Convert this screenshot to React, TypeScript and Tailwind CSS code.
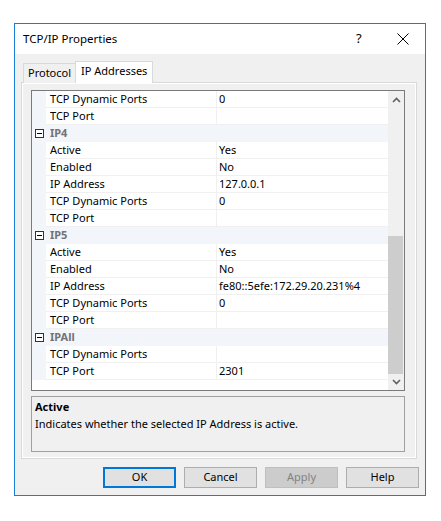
import React from "react";

type Row = { cat?: string; label?: string; value?: string };

const rows: Row[] = [
  { label: "TCP Dynamic Ports", value: "0" },
  { label: "TCP Port", value: "" },
  { cat: "IP4" },
  { label: "Active", value: "Yes" },
  { label: "Enabled", value: "No" },
  { label: "IP Address", value: "127.0.0.1" },
  { label: "TCP Dynamic Ports", value: "0" },
  { label: "TCP Port", value: "" },
  { cat: "IP5" },
  { label: "Active", value: "Yes" },
  { label: "Enabled", value: "No" },
  { label: "IP Address", value: "fe80::5efe:172.29.20.231%4" },
  { label: "TCP Dynamic Ports", value: "0" },
  { label: "TCP Port", value: "" },
  { cat: "IPAll" },
  { label: "TCP Dynamic Ports", value: "" },
  { label: "TCP Port", value: "2301" },
];

function Minus() {
  return (
    <svg width="9" height="9" viewBox="0 0 9 9" className="block">
      <rect x="0.5" y="0.5" width="8" height="8" fill="#fff" stroke="#333" />
      <line x1="2" y1="4.5" x2="7" y2="4.5" stroke="#000" />
    </svg>
  );
}

function Btn({ children, primary, disabled }: { children: React.ReactNode; primary?: boolean; disabled?: boolean }) {
  const cls = primary
    ? "border-2 border-[#0078d7] bg-[#e1e1e1] text-black"
    : disabled
    ? "border border-[#bfbfbf] bg-[#cccccc] text-[#838383]"
    : "border border-[#adadad] bg-[#e1e1e1] text-black";
  return (
    <div className={`w-[73px] h-[21px] flex items-center justify-center ${cls}`}>{children}</div>
  );
}

export default function App() {
  return (
    <div
      className="w-[441px] h-[521px] bg-white pl-[14px] pt-[23px] text-[11px] text-black"
      style={{ fontFamily: '"Noto Sans", "Liberation Sans", sans-serif' }}
    >
      <div className="w-[412px] h-[473px] border border-[#1a7fd4] flex flex-col bg-[#f0f0f0]">
        {/* title bar */}
        <div className="h-[30px] bg-white flex items-center pl-[8px] shrink-0">
          <div className="flex-1 text-[11.5px]">TCP/IP Properties</div>
          <div className="w-[10px] text-[13px] mr-[31px]">?</div>
          <svg width="12" height="12" viewBox="0 0 12 12" className="mr-[16px]">
            <line x1="0.5" y1="0.5" x2="11.5" y2="11.5" stroke="#000" strokeWidth="1" />
            <line x1="11.5" y1="0.5" x2="0.5" y2="11.5" stroke="#000" strokeWidth="1" />
          </svg>
        </div>

        {/* body */}
        <div className="flex-1 flex flex-col px-[6px] pt-[7px]">
          {/* tabs */}
          <div className="flex items-end h-[21px] pl-[2px] relative z-10">
            <div className="h-[20px] px-[4px] border border-[#d9d9d9] border-b-0 border-r-0 bg-[#f0f0f0] flex items-center mb-[-1px]">
              Protocol
            </div>
            <div className="h-[22px] px-[5px] border border-[#d9d9d9] border-b-0 bg-white flex items-center mb-[-1px] pb-[2px]">
              IP Addresses
            </div>
          </div>
          {/* panel */}
          <div className="w-[396px] h-[377px] border border-[#d9d9d9] bg-white p-[1px]">
            <div className="w-full h-full bg-[#f0f0f0] pl-[8px] pt-[6px] flex flex-col">
              {/* grid */}
              <div className="w-[374px] h-[301px] border border-[#7a7a7a] bg-white flex">
                <div className="w-[356px] flex flex-col">
                  {rows.map((r, i) =>
                    r.cat ? (
                      <div key={i} className="h-[17px] flex items-center bg-[#f2f5fa] shrink-0">
                        <div className="w-[14px] flex justify-center">
                          <Minus />
                        </div>
                        <div className="pl-[4px] font-bold text-[#737373]">{r.cat}</div>
                      </div>
                    ) : (
                      <div key={i} className="h-[17px] flex shrink-0">
                        <div className="w-[14px] bg-[#f2f5fa]" />
                        <div className="w-[171px] border-b border-r border-[#f0f0f0] pl-[4px] flex items-center whitespace-nowrap">
                          {r.label}
                        </div>
                        <div className="flex-1 border-b border-[#f0f0f0] pl-[2px] flex items-center whitespace-nowrap">
                          {r.value}
                        </div>
                      </div>
                    )
                  )}
                </div>
                {/* scrollbar */}
                <div className="w-[16px] bg-[#f0f0f0] flex flex-col">
                  <div className="h-[17px] flex items-center justify-center">
                    <svg width="9" height="6" viewBox="0 0 9 6">
                      <path d="M1 5 L4.5 1.5 L8 5" fill="none" stroke="#606060" strokeWidth="1.6" />
                    </svg>
                  </div>
                  <div className="h-[128px]" />
                  <div className="w-[15px] h-[138px] bg-[#cdcdcd]" />
                  <div className="flex-1 flex items-center justify-center">
                    <svg width="9" height="6" viewBox="0 0 9 6">
                      <path d="M1 1 L4.5 4.5 L8 1" fill="none" stroke="#606060" strokeWidth="1.6" />
                    </svg>
                  </div>
                </div>
              </div>
              {/* description */}
              <div className="w-[374px] h-[56px] border border-[#a0a0a0] mt-[5px] px-[3px] pt-[1px] leading-[17px]">
                <div className="font-bold">Active</div>
                <div>Indicates whether the selected IP Address is active.</div>
              </div>
            </div>
          </div>
          {/* buttons */}
          <div className="flex justify-end gap-[8px] mt-[8px] pr-[0px]">
            <Btn primary>OK</Btn>
            <Btn>Cancel</Btn>
            <Btn disabled>Apply</Btn>
            <Btn>Help</Btn>
          </div>
        </div>
      </div>
    </div>
  );
}
